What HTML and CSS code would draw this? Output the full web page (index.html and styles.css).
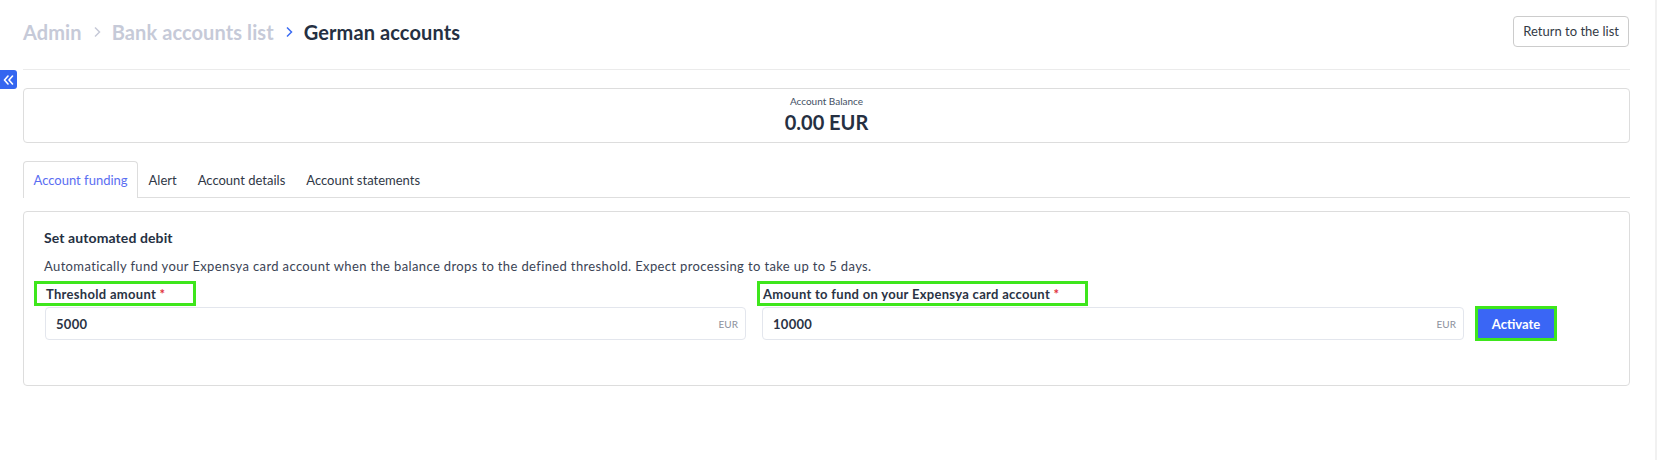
FILE: index.html
```html
<!DOCTYPE html>
<html lang="en">
<head>
    <meta charset="UTF-8">
    <meta name="viewport" content="width=device-width, initial-scale=1.0">
    <title>German accounts</title>
    <link rel="stylesheet" href="styles.css">
</head>
<body>

    <a class="collapse-toggle" href="#" title="Collapse menu">
        <svg width="11" height="10" viewBox="0 0 11 10"><polyline points="5,1 1.5,5 5,9" fill="none" stroke="#fff" stroke-width="1.6" stroke-linecap="round" stroke-linejoin="round"/><polyline points="9.5,1 6,5 9.5,9" fill="none" stroke="#fff" stroke-width="1.6" stroke-linecap="round" stroke-linejoin="round"/></svg>
    </a>

    <main class="page">
        <header class="page-header">
            <nav class="breadcrumb">
                <a class="crumb" href="#">Admin</a>
                <svg class="sep" width="8" height="12" viewBox="0 0 8 12"><polyline points="2,1.5 6.5,6 2,10.5" fill="none" stroke="#c6cad8" stroke-width="1.5"/></svg>
                <a class="crumb" href="#">Bank accounts list</a>
                <svg class="sep" width="8" height="12" viewBox="0 0 8 12"><polyline points="2,1.5 6.5,6 2,10.5" fill="none" stroke="#3b6cf3" stroke-width="1.5"/></svg>
                <span class="crumb current">German accounts</span>
            </nav>
            <a class="btn-outline" href="#">Return to the list</a>
        </header>

        <section class="balance-card">
            <p class="balance-label">Account Balance</p>
            <p class="balance-value">0.00 EUR</p>
        </section>

        <ul class="tabs">
            <li class="tab active">Account funding</li>
            <li class="tab">Alert</li>
            <li class="tab">Account details</li>
            <li class="tab">Account statements</li>
        </ul>

        <section class="form-card">
            <h2 class="form-title">Set automated debit</h2>
            <p class="form-desc">Automatically fund your Expensya card account when the balance drops to the defined threshold. Expect processing to take up to 5 days.</p>

            <div class="form-row">
                <div class="field">
                    <label class="field-label mark mark-threshold">Threshold amount <span class="req">*</span></label>
                    <div class="input-box">
                        <span class="input-value">5000</span>
                        <span class="input-suffix">EUR</span>
                    </div>
                </div>
                <div class="field">
                    <label class="field-label mark mark-fund">Amount to fund on your Expensya card account <span class="req">*</span></label>
                    <div class="input-box">
                        <span class="input-value">10000</span>
                        <span class="input-suffix">EUR</span>
                    </div>
                </div>
                <div class="field field-action">
                    <button class="btn-primary" type="button">Activate</button>
                </div>
            </div>
        </section>
    </main>

</body>
</html>
```

FILE: styles.css
```css
* { box-sizing: border-box; }
body { margin: 0; font-family: Lato, "Open Sans", sans-serif; color: #2a3344; background: #fff; }
body::after { content: ""; position: fixed; top: 0; right: 0; bottom: 0; width: 2px; background: #f1f1f1; }
p, h2, ul { margin: 0; padding: 0; }

.collapse-toggle { position: absolute; left: 0; top: 70px; width: 17px; height: 19px; background: #3466f0; border-radius: 0 3px 3px 0; display: flex; align-items: center; justify-content: center; }

.page { padding: 0 27px 0 23px; }

.page-header { display: flex; justify-content: space-between; align-items: center; padding: 16px 1px 22px 0; border-bottom: 1px solid #ebebeb; }
.breadcrumb { display: flex; align-items: center; gap: 9px; font-size: 20px; font-weight: 700; letter-spacing: 0.1px; }
.crumb { color: #c6cad8; text-decoration: none; }
.crumb.current { color: #253042; }
.sep { margin: 0 2px; }
.btn-outline { display: inline-block; height: 31px; line-height: 29px; padding: 0 9px; border: 1px solid #cccccc; border-radius: 4px; font-size: 13px; color: #333a45; text-decoration: none; }

.balance-card { margin-top: 18px; border: 1px solid #dddddd; border-radius: 4px; padding: 5px 0 8px; text-align: center; }
.balance-label { font-size: 10px; line-height: 14px; color: #445064; }
.balance-value { margin-top: 2px; font-size: 20px; line-height: 24px; font-weight: 700; color: #253042; }

.tabs { list-style: none; display: flex; margin-top: 18px; border-bottom: 1px solid #dedede; }
.tab { height: 36px; line-height: 36px; padding: 0 9.5px; font-size: 13px; color: #303846; border: 1px solid transparent; border-bottom: none; }
.tab.active { color: #5a6ef2; border-color: #dddddd; border-radius: 4px 4px 0 0; background: #fff; margin-bottom: -1px; height: 37px; }

.form-card { margin-top: 13px; border: 1px solid #dddddd; border-radius: 4px; padding: 16px 20px 45px; }
.form-title { font-size: 14px; line-height: 20px; font-weight: 700; color: #253042; letter-spacing: 0.1px; }
.form-desc { margin-top: 9px; font-size: 13px; line-height: 18px; color: #3b4455; letter-spacing: 0.37px; }

.form-row { display: grid; grid-template-columns: 702px 703px auto; column-gap: 15px; margin-top: 10px; align-items: end; }
.field { display: flex; flex-direction: column; padding-left: 1px; }
.field-action { padding-left: 0; margin-left: -4px; }
.field-label { display: inline-block; align-self: flex-start; font-size: 13px; line-height: 18px; font-weight: 700; color: #2a3344; margin-bottom: 4px; padding-left: 1px; letter-spacing: 0.3px; }
.req { color: #e0303a; }

.mark { position: relative; }
.mark::after { content: ""; position: absolute; border: 3px solid #3ee61c; pointer-events: none; }
.mark-threshold::after { left: -11px; right: -31px; top: -4px; bottom: -3px; }
.mark-fund::after { left: -5px; right: -29px; top: -4px; bottom: -3px; }

.input-box { display: flex; align-items: center; justify-content: space-between; height: 33px; border: 1px solid #e3e6ed; border-radius: 4px; padding: 0 7px 0 10px; }
.input-value { font-size: 13px; font-weight: 700; color: #2a3344; letter-spacing: 0.3px; }
.input-suffix { font-size: 10px; color: #8b909c; }

.btn-primary { width: 82px; height: 35px; border: 3px solid #3ee61c; background: #3a66f5; color: #fff; font-family: Lato, "Open Sans", sans-serif; font-size: 13px; font-weight: 700; padding: 0; margin-bottom: -1px; cursor: pointer; }
```
